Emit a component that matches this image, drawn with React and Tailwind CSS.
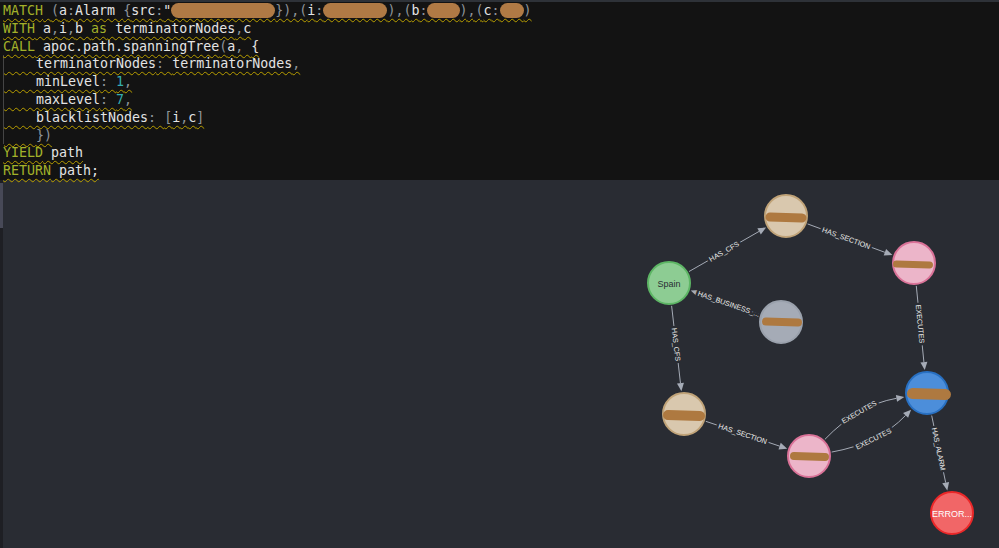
import React from "react";

const K = "text-[#a3b12a]";
const T = "text-[#e4e4e4]";
const P = "text-[#8e949a]";
const N = "text-[#35aeb0]";
const B = "blob";

const lines = [
  [[K, "MATCH"], [T, " "], [P, "("], [T, "a"], [P, ":"], [T, "Alarm "], [P, "{"], [T, "src"], [P, ":"], [T, '"'], [B, 13], [P, "}),("], [T, "i"], [P, ":"], [B, 8], [P, "),("], [T, "b"], [P, ":"], [B, 4], [P, "),("], [T, "c"], [P, ":"], [B, 3], [P, ")"]],
  [[K, "WITH"], [T, " a"], [P, ","], [T, "i"], [P, ","], [T, "b "], [K, "as"], [T, " terminatorNodes"], [P, ","], [T, "c"]],
  [[K, "CALL"], [T, " apoc.path.spanningTree"], [P, "("], [T, "a"], [P, ", "], [T, "{"]],
  [[T, "    terminatorNodes"], [P, ": "], [T, "terminatorNodes"], [P, ","]],
  [[T, "    minLevel"], [P, ": "], [N, "1"], [P, ","]],
  [[T, "    maxLevel"], [P, ": "], [N, "7"], [P, ","]],
  [[T, "    blacklistNodes"], [P, ": "], [P, "["], [T, "i"], [P, ","], [T, "c"], [P, "]"]],
  [[T, "    "], [P, "})"]],
  [[K, "YIELD"], [T, " path"]],
  [[K, "RETURN"], [T, " path;"]],
];

const R = 22;
const tan = { fill: "#D9C8AE", stroke: "#C0A378" };
const pink = { fill: "#ECB5C9", stroke: "#DA7298" };
const nodes = {
  tanTop: { x: 786, y: 216, ...tan, blob: [786, 217.5, 41, 9] },
  pinkR: { x: 914, y: 263, ...pink, blob: [913, 264.5, 40, 7] },
  spain: { x: 669, y: 283, fill: "#8DCC93", stroke: "#5DB665", label: "Spain", color: "#2A2C34" },
  gray: { x: 781, y: 322, fill: "#A5ABB6", stroke: "#9AA1AC", blob: [782, 322, 40, 8] },
  tanLow: { x: 684, y: 414, ...tan, blob: [684, 415.5, 42, 10] },
  pinkLow: { x: 809, y: 456, ...pink, blob: [809.5, 456.5, 39, 8] },
  blue: { x: 927, y: 393, fill: "#4C8EDA", stroke: "#2870C2", blob: [929, 394, 44, 11] },
  red: { x: 952, y: 513, fill: "#F16667", stroke: "#EB2728", label: "ERROR...", color: "#FFFFFF" },
};

const edges = [
  ["spain", "tanTop", "HAS_CFS", 0],
  ["tanTop", "pinkR", "HAS_SECTION", 0],
  ["gray", "spain", "HAS_BUSINESS_...", 0],
  ["spain", "tanLow", "HAS_CFS", 0],
  ["pinkR", "blue", "EXECUTES", 0],
  ["tanLow", "pinkLow", "HAS_SECTION", 0],
  ["pinkLow", "blue", "EXECUTES", -22],
  ["pinkLow", "blue", "EXECUTES", 22],
  ["blue", "red", "HAS_ALARM", 0],
];

function norm(x, y) {
  const l = Math.hypot(x, y);
  return [x / l, y / l];
}

function Edge({ e }) {
  const s = nodes[e[0]];
  const t = nodes[e[1]];
  const [ux, uy] = norm(t.x - s.x, t.y - s.y);
  const mx = (s.x + t.x) / 2;
  const my = (s.y + t.y) / 2;
  const cx = mx + -uy * e[3];
  const cy = my + ux * e[3];
  const [d1x, d1y] = norm(cx - s.x, cy - s.y);
  const [d2x, d2y] = norm(t.x - cx, t.y - cy);
  const sx = s.x + d1x * (R + 1);
  const sy = s.y + d1y * (R + 1);
  const tx = t.x - d2x * (R + 1);
  const ty = t.y - d2y * (R + 1);
  const bx = tx - d2x * 8;
  const by = ty - d2y * 8;
  const path = e[3] === 0 ? `M${sx},${sy} L${bx},${by}` : `M${sx},${sy} Q${cx},${cy} ${bx},${by}`;
  const lx = e[3] === 0 ? (sx + bx) / 2 : 0.25 * sx + 0.5 * cx + 0.25 * bx;
  const ly = e[3] === 0 ? (sy + by) / 2 : 0.25 * sy + 0.5 * cy + 0.25 * by;
  let ang = (Math.atan2(by - sy, bx - sx) * 180) / Math.PI;
  if (ang > 90) ang -= 180;
  if (ang < -90) ang += 180;
  const px = -d2y * 3.5;
  const py = d2x * 3.5;
  return (
    <g>
      <path d={path} fill="none" stroke="#A5ABB6" strokeWidth="1" />
      <polygon points={`${tx},${ty} ${bx + px},${by + py} ${bx - px},${by - py}`} fill="#A5ABB6" />
      <text
        x={lx}
        y={ly}
        transform={`rotate(${ang} ${lx} ${ly})`}
        textAnchor="middle"
        dominantBaseline="central"
        fontFamily="'Liberation Sans', Arial, sans-serif"
        fontSize="7.2"
        fill="#ECECEC"
        stroke="#292C33"
        strokeWidth="5"
        paintOrder="stroke"
        strokeLinejoin="round"
      >
        {e[2]}
      </text>
    </g>
  );
}

function Node({ n }) {
  return (
    <g>
      <circle cx={n.x} cy={n.y} r={R - 1} fill={n.fill} stroke={n.stroke} strokeWidth="2" />
      {n.blob && (
        <rect
          x={n.blob[0] - n.blob[2] / 2}
          y={n.blob[1] - n.blob[3] / 2}
          width={n.blob[2]}
          height={n.blob[3]}
          rx={n.blob[3] / 2}
          fill="#AE7940"
          transform={`rotate(1.5 ${n.blob[0]} ${n.blob[1]})`}
        />
      )}
      {n.label && (
        <text
          x={n.x}
          y={n.y + 0.5}
          textAnchor="middle"
          dominantBaseline="central"
          fontFamily="'Liberation Sans', Arial, sans-serif"
          fontSize="9"
          fill={n.color}
        >
          {n.label}
        </text>
      )}
    </g>
  );
}

function CodeLine({ tokens, guide }) {
  const content = (
    <span className="underline decoration-wavy decoration-[#b89e00] decoration-1 underline-offset-[3px]">
      {tokens.map((tk, i) =>
        tk[0] === B ? (
          <span key={i} className="bg-[#b07a45] rounded-full">
            {"\u00a0".repeat(tk[1])}
          </span>
        ) : (
          <span key={i} className={tk[0]}>
            {tk[1]}
          </span>
        )
      )}
    </span>
  );
  return (
    <div className="pl-[3px] h-[17.8px]">
      {guide ? <div className="border-l border-[#454545] h-full">{content}</div> : content}
    </div>
  );
}

export default function App() {
  return (
    <div className="w-full h-screen flex flex-col bg-[#292c33] overflow-hidden">
      <div className="h-[2px] bg-[#2e3238]" />
      <div
        className="h-[178px] bg-[#131313] whitespace-pre text-[13.3px] leading-[17.8px]"
        style={{ fontFamily: "'DejaVu Sans Mono', 'Liberation Mono', monospace" }}
      >
        {lines.map((l, i) => (
          <CodeLine key={i} tokens={l} guide={i >= 3 && i <= 7} />
        ))}
      </div>
      <div className="flex-1 flex min-h-0">
        <div className="w-[3px] bg-[#1e1f24] flex flex-col">
          <div className="mt-[3px] h-[45px] bg-[#474957]" />
        </div>
        <div className="flex-1 relative">
          <svg width="996" height="368" viewBox="3 180 996 368" className="block">
            {edges.map((e, i) => (
              <Edge key={i} e={e} />
            ))}
            {Object.values(nodes).map((n, i) => (
              <Node key={i} n={n} />
            ))}
          </svg>
        </div>
      </div>
    </div>
  );
}
